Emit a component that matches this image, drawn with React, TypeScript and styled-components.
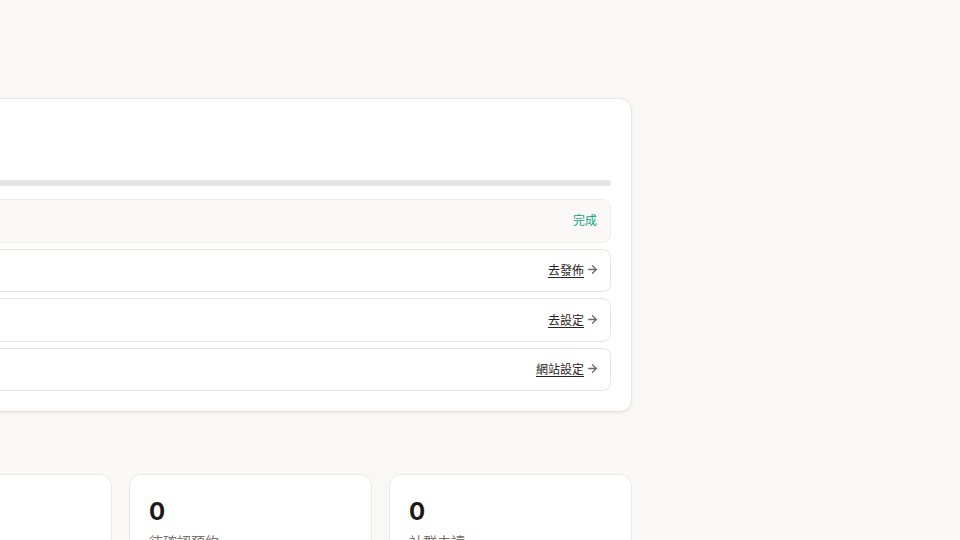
import React from "react";
import styled, { createGlobalStyle } from "styled-components";
import { ArrowRight, Check } from "lucide-react";

const Global = createGlobalStyle`
  html, body { margin: 0; padding: 0; background: #f9f8f6; overflow: hidden; }
  body { font-family: "Inter", "Noto Sans CJK TC", sans-serif; color: #1c1917; }
`;

const Page = styled.div`
  width: 960px;
  height: 540px;
  overflow: hidden;
  position: relative;
`;

const Main = styled.main`
  margin-left: -391px;
  width: 1023px;
  padding-top: 98px;
  display: flex;
  flex-direction: column;
  gap: 62px;
`;

const Card = styled.section`
  background: #ffffff;
  border: 1px solid #e7e5e1;
  border-radius: 12px;
  box-shadow: 0 1px 3px rgba(0, 0, 0, 0.07);
  padding: 20px 20px 20px 20px;
  display: flex;
  flex-direction: column;
`;

const Header = styled.div`
  height: 61px;
  display: flex;
  flex-direction: column;
  gap: 6px;
`;

const Title = styled.h2`
  margin: 0;
  font-size: 16px;
  font-weight: 700;
`;

const Sub = styled.p`
  margin: 0;
  font-size: 12px;
  color: #78716c;
`;

const Track = styled.div`
  height: 6px;
  border-radius: 3px;
  background: #e7e5e2;
  overflow: hidden;
  margin-bottom: 13px;
`;

const Fill = styled.div`
  height: 100%;
  background: #e7e5e2;
`;

const List = styled.div`
  display: flex;
  flex-direction: column;
  gap: 6px;
`;

const Row = styled.div<{ $done?: boolean }>`
  height: 43.5px;
  box-sizing: border-box;
  border: 1px solid ${(p) => (p.$done ? "#f1efec" : "#e7e5e1")};
  background: ${(p) => (p.$done ? "#faf9f7" : "#ffffff")};
  border-radius: 8px;
  padding: 0 ${(p) => (p.$done ? 13 : 11)}px 0 14px;
  display: flex;
  align-items: center;
  justify-content: space-between;
`;

const Label = styled.span`
  display: flex;
  align-items: center;
  gap: 8px;
  font-size: 13px;
  color: #44403c;
`;

const Done = styled.span`
  font-size: 12px;
  color: #0ea47a;
  margin-top: -3px;
`;

const Link = styled.a`
  display: flex;
  align-items: center;
  gap: 2px;
  font-size: 12px;
  color: #292524;
  cursor: pointer;
  margin-top: -1px;
  span { text-decoration: underline; text-underline-offset: 2px; }
  svg { color: #6f6a65; }
`;

const Stats = styled.div`
  display: grid;
  grid-template-columns: repeat(4, 242.5px);
  gap: 17.5px;
`;

const Stat = styled.div`
  background: #ffffff;
  border: 1px solid #ebe9e6;
  border-radius: 12px;
  padding: 20px 19px;
  height: 120px;
  box-sizing: border-box;
`;

const Num = styled.div`
  font-size: 24px;
  font-weight: 700;
  line-height: 32px;
  color: #1c1917;
  margin-top: 1px;
`;

const StatLabel = styled.div`
  font-size: 14px;
  line-height: 20px;
  color: #78716c;
  margin-top: 4px;
`;

const rows = [
  { label: "建立帳號", done: true },
  { label: "發佈第一篇", link: "去發佈" },
  { label: "設定預約", link: "去設定" },
  { label: "完善網站", link: "網站設定" },
];

const stats = [
  { n: "0", l: "今日訪客" },
  { n: "0", l: "本月訂單" },
  { n: "0", l: "待確認預約" },
  { n: "0", l: "社群未讀" },
];

export default function App() {
  return (
    <Page>
      <Global />
      <Main>
        <Card>
          <Header>
            <Title>開始使用</Title>
            <Sub>完成以下步驟</Sub>
          </Header>
          <Track>
            <Fill style={{ width: "25%" }} />
          </Track>
          <List>
            {rows.map((r) => (
              <Row key={r.label} $done={r.done}>
                <Label>
                  {r.done ? <Check size={12} /> : null}
                  {r.label}
                </Label>
                {r.done ? (
                  <Done>完成</Done>
                ) : (
                  <Link>
                    <span>{r.link}</span>
                    <ArrowRight size={13} strokeWidth={2.4} />
                  </Link>
                )}
              </Row>
            ))}
          </List>
        </Card>
        <Stats>
          {stats.map((s) => (
            <Stat key={s.l}>
              <Num>{s.n}</Num>
              <StatLabel>{s.l}</StatLabel>
            </Stat>
          ))}
        </Stats>
      </Main>
    </Page>
  );
}
